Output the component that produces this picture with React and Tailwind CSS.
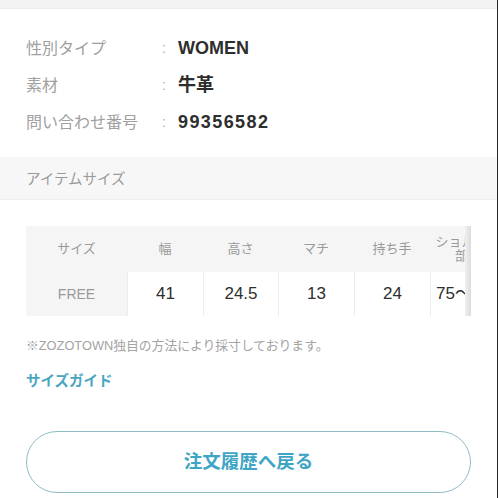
import React from "react";

const font = { fontFamily: '"Liberation Sans","Noto Sans CJK JP",sans-serif' };

function InfoRow({ label, value, track }) {
  return (
    <div className="flex items-center h-[37px]">
      <div className="w-[136px] text-[16px] text-[#a0a0a0]">{label}</div>
      <div className="w-[16px] text-[14px] text-[#b0b0b0]">:</div>
      <div className={`text-[18px] font-bold text-[#2e2e2e] ${track ? "tracking-[1.4px]" : "tracking-[0px]"}`}>{value}</div>
    </div>
  );
}

export default function App() {
  const cols = [
    { h: "幅", v: "41", w: "w-[76px]" },
    { h: "高さ", v: "24.5", w: "w-[75px]" },
    { h: "マチ", v: "13", w: "w-[76px]" },
    { h: "持ち手", v: "24", w: "w-[76px]" },
  ];
  return (
    <div className="relative w-[498px] h-[498px] bg-white overflow-hidden" style={font}>
      <div className="h-[9px] bg-[#f3f3f3] border-b border-[#ececec]" />
      <div className="px-[26px] pt-[21px]">
        <InfoRow label="性別タイプ" value="WOMEN" />
        <InfoRow label="素材" value="牛革" />
        <InfoRow label="問い合わせ番号" value="99356582" track />
      </div>
      <div className="mt-[16px] h-[43px] bg-[#f7f7f7] border-b border-[#efefef] flex items-center pt-[3px] px-[26px]">
        <span className="text-[14.5px] text-[#9a9a9a]">アイテムサイズ</span>
      </div>
      <div className="px-[26px] mt-[26px]">
        <div className="relative w-[445px] overflow-hidden bg-[#f5f5f5]">
          <div className="flex w-[520px]">
            <div className="w-[101px] shrink-0 h-[46px] flex items-center justify-center text-[13px] text-[#9a9a9a]">サイズ</div>
            {cols.map((c) => (
              <div key={c.h} className={`${c.w} shrink-0 h-[46px] flex items-center justify-center text-[13px] text-[#9a9a9a]`}>{c.h}</div>
            ))}
            <div className="w-[76px] shrink-0 h-[46px] flex flex-col items-center justify-center text-[13px] leading-[14px] text-[#9a9a9a]">
              <span>ショルダー</span>
              <span>部分</span>
            </div>
          </div>
          <div className="flex w-[520px]">
            <div className="w-[101px] shrink-0 h-[44px] flex items-center justify-center text-[14px] text-[#999]">FREE</div>
            {cols.map((c) => (
              <div key={c.v} className={`${c.w} shrink-0 h-[44px] bg-white border-l border-[#ededed] flex items-center justify-center text-[17px] text-[#2e2e2e]`}>{c.v}</div>
            ))}
            <div className="w-[76px] shrink-0 h-[44px] bg-white border-l border-[#ededed] flex items-center pl-[5px] text-[17px] text-[#2e2e2e]">75〜130</div>
          </div>
          <div className="absolute right-0 top-0 h-full w-[6px] bg-gradient-to-r from-[#f0f0f0] to-[#dcdcdc]" />
        </div>
        <div className="mt-[21px] h-[18px] flex items-center text-[12.8px] text-[#a3a3a3]">※ZOZOTOWN独自の方法により採寸しております。</div>
        <div className="mt-[17px] h-[20px] flex items-center text-[14.5px] font-bold text-[#4aa6c0]">サイズガイド</div>
        <div className="mt-[39px] w-[445px] h-[62px] rounded-full border-[1.5px] border-[#8fbcc6] flex items-center justify-center">
          <span className="text-[18.5px] font-bold text-[#3ea5c5]">注文履歴へ戻る</span>
        </div>
      </div>
      <div className="absolute right-0 top-0 w-[1px] h-full bg-[#2a2a2a]" />
    </div>
  );
}
